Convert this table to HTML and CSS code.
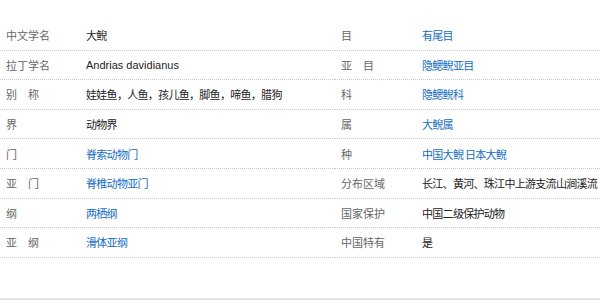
FILE: index.html
```
<!DOCTYPE html>
<html lang="zh-CN">
<head>
<meta charset="utf-8">
<title>大鲵</title>
<link rel="stylesheet" href="styles.css">
</head>
<body>
<div class="info">
  <dl class="col col-left">
    <div class="row"><dt>中文学名</dt><dd>大鲵</dd></div>
    <div class="row"><dt>拉丁学名</dt><dd class="latin">Andrias davidianus</dd></div>
    <div class="row"><dt>别　称</dt><dd>娃娃鱼，人鱼，孩儿鱼，脚鱼，啼鱼，腊狗</dd></div>
    <div class="row"><dt>界</dt><dd>动物界</dd></div>
    <div class="row"><dt>门</dt><dd><a href="#">脊索动物门</a></dd></div>
    <div class="row"><dt>亚　门</dt><dd><a href="#">脊椎动物亚门</a></dd></div>
    <div class="row"><dt>纲</dt><dd><a href="#">两栖纲</a></dd></div>
    <div class="row"><dt>亚　纲</dt><dd><a href="#">滑体亚纲</a></dd></div>
  </dl>
  <dl class="col col-right">
    <div class="row"><dt>目</dt><dd><a href="#">有尾目</a></dd></div>
    <div class="row"><dt>亚　目</dt><dd><a href="#">隐鳃鲵亚目</a></dd></div>
    <div class="row"><dt>科</dt><dd><a href="#">隐鳃鲵科</a></dd></div>
    <div class="row"><dt>属</dt><dd><a href="#">大鲵属</a></dd></div>
    <div class="row"><dt>种</dt><dd><a href="#">中国大鲵</a> <a href="#">日本大鲵</a></dd></div>
    <div class="row"><dt>分布区域</dt><dd>长江、黄河、珠江中上游支流山涧溪流</dd></div>
    <div class="row"><dt>国家保护</dt><dd>中国二级保护动物</dd></div>
    <div class="row"><dt>中国特有</dt><dd>是</dd></div>
  </dl>
</div>
<div class="bottom-line"></div>
</body>
</html>
```
FILE: styles.css
```
html, body {
  margin: 0;
  padding: 0;
  background: #fff;
}
body {
  width: 600px;
  height: 300px;
  overflow: hidden;
  font-family: "Noto Sans CJK SC", "Microsoft YaHei", sans-serif;
  font-size: 11px;
  color: #333;
}
.info {
  display: flex;
  padding-top: 21px;
}
.col {
  margin: 0;
  padding: 0;
}
.col-left {
  width: 335px;
  flex: none;
}
.col-right {
  flex: 1;
  min-width: 0;
}
.row {
  display: flex;
  align-items: center;
  height: 29.6px;
  box-sizing: border-box;
  border-bottom: 1px dotted #c8c8c8;
  white-space: nowrap;
}
dt {
  width: 80px;
  padding-left: 6px;
  flex: none;
  color: #666;
}
.col-right dt {
  width: 81px;
}
dd {
  margin: 0;
  color: #222;
  letter-spacing: -0.7px;
}
dd a {
  color: #136ec2;
  text-decoration: none;
}
.latin {
  font-family: "Liberation Sans", Arial, sans-serif;
  letter-spacing: 0;
}
.bottom-line {
  margin-top: 40px;
  height: 2px;
  background: #e3e3e3;
}
```
